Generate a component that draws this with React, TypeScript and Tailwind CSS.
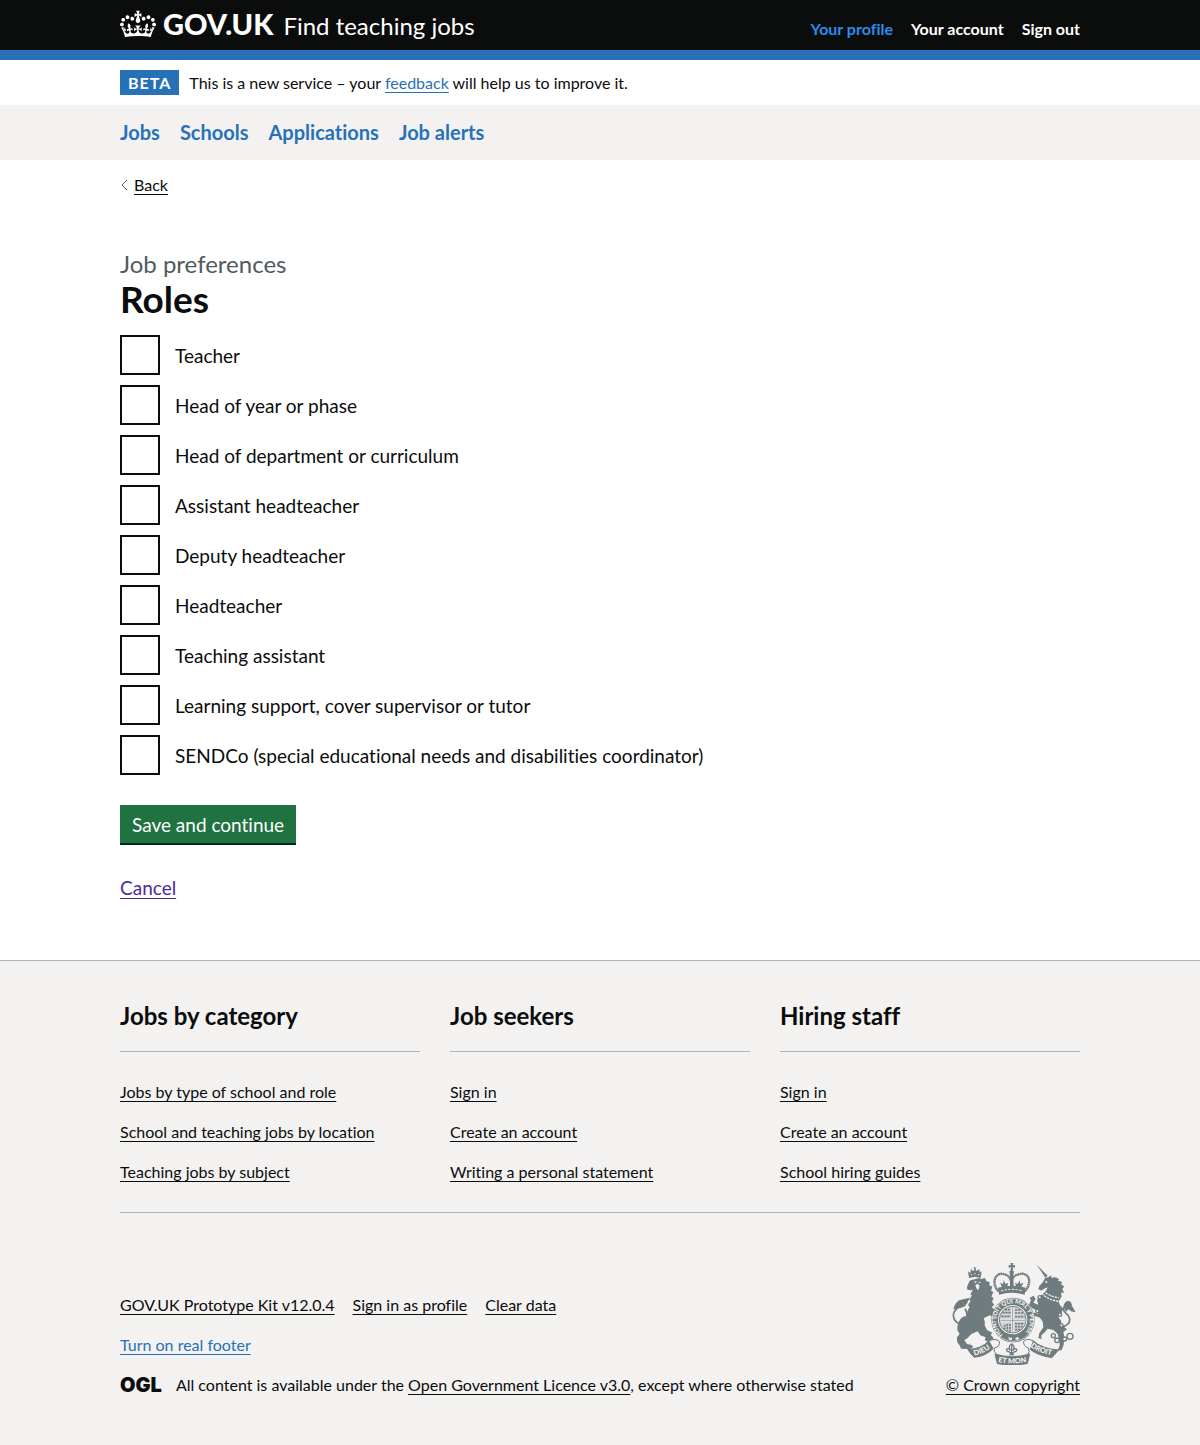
const ROLES = [
  "Teacher",
  "Head of year or phase",
  "Head of department or curriculum",
  "Assistant headteacher",
  "Deputy headteacher",
  "Headteacher",
  "Teaching assistant",
  "Learning support, cover supervisor or tutor",
  "SENDCo (special educational needs and disabilities coordinator)",
];

const FOOTER_COLUMNS = [
  {
    title: "Jobs by category",
    links: ["Jobs by type of school and role", "School and teaching jobs by location", "Teaching jobs by subject"],
  },
  { title: "Job seekers", links: ["Sign in", "Create an account", "Writing a personal statement"] },
  { title: "Hiring staff", links: ["Sign in", "Create an account", "School hiring guides"] },
];

const linkClass = "underline underline-offset-3 decoration-1 [text-decoration-skip-ink:none]";

function Crown() {
  return (
    <svg aria-hidden="true" viewBox="0 0 132 97" className="h-8 w-9 shrink-0 fill-current">
      <path
        fillRule="evenodd"
        d="M25 30.2c3.5 1.5 7.7-.2 9.1-3.7 1.5-3.6-.2-7.8-3.9-9.2-3.6-1.4-7.6.3-9.1 3.9-1.4 3.5.3 7.5 3.9 9zM9 39.5c3.6 1.5 7.8-.2 9.2-3.7 1.5-3.6-.2-7.8-3.9-9.1-3.6-1.5-7.6.2-9.1 3.8-1.4 3.5.3 7.5 3.8 9zM4.4 57.2c3.5 1.5 7.7-.2 9.1-3.8 1.5-3.6-.2-7.7-3.9-9.1-3.5-1.5-7.6.3-9.1 3.8-1.4 3.5.3 7.6 3.9 9.1zm38.3-21.4c3.5 1.5 7.7-.2 9.1-3.8 1.5-3.6-.2-7.7-3.9-9.1-3.6-1.5-7.6.3-9.1 3.8-1.3 3.6.4 7.7 3.9 9.1zm64.4-5.6c-3.6 1.5-7.8-.2-9.1-3.7-1.5-3.6.2-7.8 3.8-9.2 3.6-1.4 7.7.3 9.2 3.9 1.3 3.5-.4 7.5-3.9 9zm15.9 9.3c-3.6 1.5-7.7-.2-9.1-3.7-1.5-3.6.2-7.8 3.7-9.1 3.6-1.5 7.7.2 9.2 3.8 1.5 3.5-.3 7.5-3.8 9zm4.7 17.7c-3.6 1.5-7.8-.2-9.2-3.8-1.5-3.6.2-7.7 3.9-9.1 3.6-1.5 7.7.3 9.2 3.8 1.3 3.5-.4 7.6-3.9 9.1zM89.3 35.8c-3.6 1.5-7.8-.2-9.2-3.8-1.4-3.6.2-7.7 3.9-9.1 3.6-1.5 7.7.3 9.2 3.8 1.4 3.6-.3 7.7-3.9 9.1zM69.7 17.7l8.9 4.7V9.3l-8.9 2.8c-.2-.3-.5-.6-.9-.9L72.4 0H59.6l3.5 11.2c-.3.3-.6.5-.9.9l-8.8-2.8v13.1l8.8-4.7c.3.3.6.7.9.9l-5 15.4v.1c-.2.8-.4 1.6-.4 2.4 0 4.1 3.1 7.5 7 8.1h.2c.3 0 .7.1 1 .1.4 0 .7 0 1-.1h.2c4-.6 7.1-4.1 7.1-8.1 0-.8-.1-1.7-.4-2.4V34l-5.1-15.4c.4-.2.7-.6 1-.9zM66 92.8c16.9 0 32.8 1.1 47.1 3.2 4-16.9 8.9-26.7 14-33.5l-9.6-3.4c1 4.9 1.1 7.2 0 10.2-1.5-1.4-3-4.3-4.2-8.7L108.6 76c2.8-2 5-3.2 7.5-3.3-4.4 9.4-10 11.9-13.6 11.2-4.3-.8-6.3-4.6-5.6-7.9 1-4.7 5.7-5.9 8-.5 4.3-8.7-3-11.4-7.6-8.8 7.1-7.2 7.9-13.5 2.1-21.1-8 6.1-8.1 12.3-4.5 20.8-4.7-5.4-12.1-2.5-9.5 6.2 3.4-5.2 7.9-2 7.2 3.1-.6 4.3-6.4 7.8-13.5 7.2-10.3-.9-10.9-8-11.2-13.8 2.5-.5 7.1 1.8 11 7.3L80.2 60c-4.1 4.4-8 5.3-12.3 5.4 1.4-4.4 8-11.6 8-11.6H55.5s6.4 7.2 7.9 11.6c-4.2-.1-8-1-12.3-5.4l1.4 16.4c3.9-5.5 8.5-7.7 10.9-7.3-.3 5.8-.9 12.8-11.1 13.8-7.2.6-12.9-2.9-13.5-7.2-.7-5 3.8-8.3 7.1-3.1 2.7-8.7-4.6-11.6-9.4-6.2 3.7-8.5 3.6-14.7-4.6-20.8-5.8 7.6-5 13.9 2.2 21.1-4.7-2.6-11.9.1-7.7 8.8 2.3-5.5 7.1-4.2 8.1.5.7 3.3-1.3 7.1-5.7 7.9-3.5.7-9-1.8-13.5-11.2 2.5.1 4.7 1.3 7.5 3.3l-4.7-15.4c-1.2 4.4-2.7 7.2-4.3 8.7-1.1-3-.9-5.3 0-10.2l-9.5 3.4c5 6.9 9.9 16.7 14 33.5 14.8-2.1 30.8-3.2 47.7-3.2z"
      />
    </svg>
  );
}

function CoatOfArms() {
  return (
    <svg aria-hidden="true" viewBox="33 39 378 306" className="h-[102px] w-[126px] fill-[#6f7b7e] stroke-[#6f7b7e]">
      {/* lion */}
      <g stroke="none">
        <path d="M92 92L84 110L85 119L97 121L102 118L94 134L99 136L90 150L95 152L87 166L92 170L85 184L84 198Q72 198 64 208Q54 222 55 240L62 252L54 262Q52 278 62 286L66 296L94 297L103 290L96 284L84 282L76 270Q88 264 97 252L116 244L124 256L140 262L137 270L148 277L165 272L162 262L155 254L160 248L144 240L137 226Q139 214 134 205L152 196L166 204L163 188L168 180L158 172L166 164L159 156L164 144L157 140L163 126L156 122L160 110L151 106L152 96L142 94L138 84L126 87L120 84L98 90Z" />
        <path d="M90 84L87 64L94 69L96 57L103 64L108 54L113 63L121 57L122 67L128 64L125 84L108 80Z" />
        <circle cx="107" cy="54" r="3" />
        <path d="M34 180L44 178Q45 162 60 151L92 143L86 156Q80 172 64 174Z" />
      </g>
      <path d="M62 222Q44 214 43 196Q44 182 58 172Q72 164 80 154M60 222Q80 220 84 202Q86 190 78 176" fill="none" strokeWidth="5" />
      <g fill="#f3f2f1" stroke="none">
        <path d="M104 96l9-3l-2 6zM118 95l9 1l-6 4zM109 106l6-5l7 6l-4 14l-6-6z" />
        <circle cx="97" cy="74" r="2" />
        <circle cx="108" cy="71" r="2" />
        <circle cx="119" cy="74" r="2" />
      </g>
      {/* unicorn */}
      <g stroke="none">
        <path d="M293 44L326 77L319 83Z" />
        <path d="M318 84L330 81L336 76L338 84Q350 78 360 88L357 92L370 96L366 102L376 110L370 116L375 128L366 128L368 140L359 154L362 164L373 176L366 192L358 200L366 212L368 224L384 238L373 246L376 262L374 284L368 300L356 302L362 286L361 270L356 252L343 240L326 236L318 246L307 256L307 268L298 264L301 250L313 232L311 215L303 203L288 198L276 204L275 192L288 188L297 192L296 182L282 176L270 166L276 150L272 144L283 137L290 146L283 158L298 164L294 150L302 138L313 130L321 122L326 112L315 116L306 122L298 117L301 108L312 96Z" />
        <path d="M374 172Q374 156 386 152L396 156L398 166L410 187L396 184Q386 172 382 186Z" />
      </g>
      <path d="M370 230Q394 226 392 206Q388 194 379 188Q370 180 377 166Q387 152 397 166" fill="none" strokeWidth="5" />
      <path d="M308 130Q328 150 358 154M312 122Q332 140 360 143" fill="none" stroke="#f3f2f1" strokeWidth="4" strokeDasharray="7 3" />
      <circle cx="322" cy="96" r="3" stroke="none" fill="#f3f2f1" />
      <g fill="#f3f2f1" strokeWidth="4">
        <circle cx="343" cy="257" r="6" />
        <circle cx="354" cy="271" r="7" />
        <circle cx="377" cy="267" r="6" />
        <circle cx="393" cy="259" r="9" />
        <circle cx="363" cy="194" r="5" />
        <circle cx="367" cy="226" r="5" />
        <circle cx="302" cy="142" r="5" />
        <circle cx="295" cy="183" r="5" />
      </g>
      {/* royal crown */}
      <g>
        <path d="M178 124Q160 102 170 82Q180 66 200 74Q212 78 216 94Q222 78 236 74Q258 66 268 82Q276 102 258 124" fill="none" strokeWidth="7" strokeDasharray="6 1" />
        <path d="M177 113Q218 101 260 113L257 134Q218 122 180 134Z" stroke="none" />
        <path d="M213 76L211 64L218 60L225 64L223 76L224 108H213Z" stroke="none" />
        <path d="M214 39h9l-2 7l7-1v8l-7-1l2 9h-9l2-9l-7 1v-8l7 1z" stroke="none" />
        <path d="M189 112l-6-14l9 4l2-11l6 11l8-4l-4 14zM232 112l-4-14l8 4l6-11l2 11l9-4l-6 14z" stroke="none" />
        <path d="M186 123Q218 113 252 123" fill="none" stroke="#f3f2f1" strokeWidth="3" strokeDasharray="7 4" />
      </g>
      {/* garter and quartered shield */}
      <ellipse cx="222" cy="210" rx="65" ry="67" stroke="none" />
      <ellipse cx="222" cy="210" rx="62" ry="64" fill="none" stroke="#f3f2f1" strokeWidth="2" />
      <path id="garter" d="M192 255Q170 236 172 208Q176 163 222 160Q268 163 272 208Q272 240 250 258" fill="none" stroke="none" />
      <text fontFamily="Lato, sans-serif" fontWeight="900" fontSize="18" fill="#f3f2f1" stroke="none">
        <textPath href="#garter">HONI SOIT QUI MAL Y PENSE</textPath>
      </text>
      <circle cx="221" cy="209" r="44" fill="#f3f2f1" stroke="none" />
      <circle cx="221" cy="209" r="40" fill="#d4d7d7" strokeWidth="3" />
      <g fill="none" strokeWidth="5">
        <path d="M197 179h18M190 188h26M187 199h28M228 180h16M228 189h24M228 200h28M197 224v14M205 221v22M213 221v24M228 221h27M228 230h23M228 239h16" strokeDasharray="7 2" />
      </g>
      <path d="M221 171v76M183 211h76" fill="none" stroke="#f3f2f1" strokeWidth="7" />
      <path d="M221 172v74M184 211h74" fill="none" strokeWidth="2" />
      <path d="M208 260l6 4l6-2l-2 8l-8-1zM229 264l7-3l5 4l-5 5l-7-2z" fill="#f3f2f1" stroke="none" />
      {/* motto ribbon */}
      <g strokeWidth="3">
        <path d="M86 298Q126 298 150 272L166 292Q144 318 106 322Q96 314 86 298Z" />
        <path d="M282 272Q308 296 358 300Q348 314 338 323Q292 316 268 294Z" />
        <path d="M168 312Q218 328 272 312L265 341Q218 350 175 341Z" />
        <path d="M151 272Q170 264 181 274Q184 290 166 294Q162 306 174 314M282 272Q264 264 254 274Q252 288 268 294Q274 304 266 314" fill="#f3f2f1" />
      </g>
      <path id="motto-left" d="M106 316Q137 311 164 287" fill="none" stroke="none" />
      <path id="motto-middle" d="M177 336Q218 346 270 335" fill="none" stroke="none" />
      <path id="motto-right" d="M274 290Q301 311 348 317" fill="none" stroke="none" />
      <g fontFamily="Lato, sans-serif" fontWeight="900" fontSize="22" fill="#f3f2f1" stroke="none">
        <text><textPath href="#motto-left">DIEU</textPath></text>
        <text><textPath href="#motto-middle">ET MON</textPath></text>
        <text><textPath href="#motto-right">DROIT</textPath></text>
      </g>
      {/* fleur-de-lis */}
      <path
        d="M218 281Q230 290 222 300M218 281Q206 290 214 300M218 284V316M214 302Q208 292 203 298Q202 306 212 305M222 302Q228 292 233 298Q234 306 224 305M210 308h16M218 308L212 316M218 308L224 316"
        fill="none"
        strokeWidth="4"
      />
    </svg>
  );
}

export default function App() {
  return (
    <div className="flex min-h-screen flex-col bg-[#f3f2f1] font-['Lato',sans-serif] text-[#0b0c0c] [font-variant-ligatures:none]">
      <header className="bg-[#0b0c0c] text-white">
        <div className="mx-auto flex h-[50px] max-w-[960px] items-center justify-between">
          <div className="flex items-center gap-2.5 pb-0.5">
            <a href="#" className="flex items-center gap-[7px]">
              <Crown />
              <span className="text-[29px] leading-8 font-black">GOV.UK</span>
            </a>
            <a href="#" className="pt-1 text-2xl leading-7">Find teaching jobs</a>
          </div>
          <nav aria-label="Account" className="flex gap-[18px] pt-2 text-base leading-5 font-bold">
            <a href="#" className="text-[#2b8cee]">Your profile</a>
            <a href="#">Your account</a>
            <a href="#">Sign out</a>
          </nav>
        </div>
        <div className="h-2.5 bg-[#2771b8]" />
      </header>

      <div className="bg-white">
        <div className="mx-auto flex max-w-[960px] items-center gap-2.5 py-2.5">
          <strong className="bg-[#2771b8] px-2 text-base leading-[25px] font-bold tracking-[1px] text-white">BETA</strong>
          <span className="text-base leading-5">
            This is a new service – your <a href="#" className={`text-[#2771b8] ${linkClass}`}>feedback</a> will help us to improve it.
          </span>
        </div>
      </div>

      <nav aria-label="Main" className="bg-[#f3f2f1]">
        <div className="mx-auto flex max-w-[960px] gap-5 py-[15px] text-xl leading-[25px] font-bold text-[#2771b8]">
          <a href="#">Jobs</a>
          <a href="#">Schools</a>
          <a href="#">Applications</a>
          <a href="#">Job alerts</a>
        </div>
      </nav>

      <div className="bg-white">
        <div className="mx-auto max-w-[960px] pt-[15px] pb-[60px]">
          <a href="#" className="flex w-fit items-center gap-1.5 text-base leading-5">
            <svg aria-hidden="true" viewBox="0 0 8 12" className="h-3 w-2 fill-none stroke-[#505a5f]">
              <path d="M7 1L2 6L7 11" />
            </svg>
            <span className={linkClass}>Back</span>
          </a>

          <main className="pt-[54px]">
            <form onSubmit={(event) => event.preventDefault()}>
              <fieldset>
                <legend>
                  <span className="block text-2xl leading-[30px] text-[#505a5f]">Job preferences</span>
                  <h1 className="text-[37px] leading-10 font-bold">Roles</h1>
                </legend>
                <div className="mt-4 flex flex-col gap-2.5">
                  {ROLES.map((role) => (
                    <label key={role} className="flex items-center gap-[15px] text-[19px] leading-[25px]">
                      <input
                        type="checkbox"
                        name="roles"
                        value={role}
                        className="size-10 shrink-0 appearance-none border-2 border-[#0b0c0c] bg-white checked:bg-[#0b0c0c]"
                      />
                      {role}
                    </label>
                  ))}
                </div>
              </fieldset>
              <button
                type="submit"
                className="mt-[30px] block border-b-2 border-[#002d18] bg-[#1f7340] px-3 pt-[7px] pb-1.5 text-[19px] leading-[25px] text-white"
              >
                Save and continue
              </button>
              <a href="#" className={`mt-[30px] block w-fit text-[19px] leading-[25px] text-[#4c2c92] ${linkClass}`}>
                Cancel
              </a>
            </form>
          </main>
        </div>
      </div>

      <footer className="border-t border-[#b1b4b6] text-base leading-5">
        <div className="mx-auto max-w-[960px] pt-10 pb-[50px]">
          <div className="grid grid-cols-3 gap-[30px] border-b border-[#b1b4b6] pb-[30px]">
            {FOOTER_COLUMNS.map((column) => (
              <section key={column.title}>
                <h2 className="border-b border-[#b1b4b6] pb-5 text-2xl leading-[30px] font-bold">{column.title}</h2>
                <ul className="flex flex-col gap-5 pt-[30px]">
                  {column.links.map((link) => (
                    <li key={link}>
                      <a href="#" className={linkClass}>{link}</a>
                    </li>
                  ))}
                </ul>
              </section>
            ))}
          </div>

          <div className="flex items-end justify-between pt-[50px]">
            <div className="flex flex-col gap-5">
              <div className="flex gap-[18px]">
                <a href="#" className={linkClass}>GOV.UK Prototype Kit v12.0.4</a>
                <a href="#" className={linkClass}>Sign in as profile</a>
                <a href="#" className={linkClass}>Clear data</a>
              </div>
              <a href="#" className={`self-start text-[#2771b8] ${linkClass}`}>Turn on real footer</a>
              <div className="flex items-center gap-3.5">
                <span className="font-['Inter',sans-serif] text-xl leading-5 font-black">OGL</span>
                <p>
                  All content is available under the <a href="#" className={linkClass}>Open Government Licence v3.0</a>, except where otherwise stated
                </p>
              </div>
            </div>
            <a href="#" className="flex flex-col items-center gap-2.5">
              <CoatOfArms />
              <span className={linkClass}>© Crown copyright</span>
            </a>
          </div>
        </div>
      </footer>
    </div>
  );
}
